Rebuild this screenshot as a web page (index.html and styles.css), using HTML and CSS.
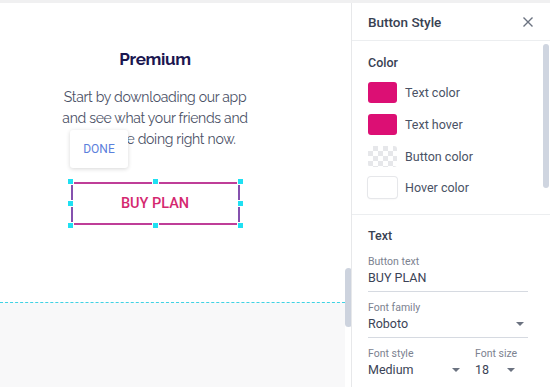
FILE: index.html
```html
<!DOCTYPE html>
<html>
<head>
<meta charset="utf-8">
<link rel="stylesheet" href="styles.css">
</head>
<body>
<div class="topbar"></div>
<div class="main">
  <div class="canvas">
    <div class="page">
      <div class="column">
        <h1 class="title">Premium</h1>
        <p class="lead">Start by downloading our app<br>and see what your friends and<br>family are doing right now.</p>
        <div class="btnwrap">
          <div class="buybtn">BUY PLAN</div>
          <span class="h h-tl"></span><span class="h h-tc"></span><span class="h h-tr"></span>
          <span class="h h-ml"></span><span class="h h-mr"></span>
          <span class="h h-bl"></span><span class="h h-bc"></span><span class="h h-br"></span>
        </div>
      </div>
      <div class="done">DONE</div>
    </div>
    <div class="below"></div>
    <div class="cscroll"></div>
  </div>
  <div class="panel">
    <div class="phead">
      <span class="ptitle">Button Style</span>
      <svg class="close" width="12" height="12" viewBox="0 0 12 12"><path d="M1.5 1.5 L10.5 10.5 M10.5 1.5 L1.5 10.5" stroke="#6b7280" stroke-width="1.4" fill="none"/></svg>
    </div>
    <div class="section">
      <div class="stitle">Color</div>
      <div class="crow"><span class="sw sw-pink"></span><span class="clabel">Text color</span></div>
      <div class="crow"><span class="sw sw-pink"></span><span class="clabel">Text hover</span></div>
      <div class="crow"><span class="sw sw-check"></span><span class="clabel">Button color</span></div>
      <div class="crow"><span class="sw sw-white"></span><span class="clabel">Hover color</span></div>
    </div>
    <div class="section sec2">
      <div class="stitle">Text</div>
      <div class="field">
        <div class="flabel">Button text</div>
        <div class="fvalue">BUY PLAN</div>
      </div>
      <div class="field">
        <div class="flabel">Font family</div>
        <div class="fvalue sel">Roboto<span class="arrow"></span></div>
      </div>
      <div class="frow">
        <div class="field f-style">
          <div class="flabel">Font style</div>
          <div class="fvalue sel nb">Medium<span class="arrow"></span></div>
        </div>
        <div class="field f-size">
          <div class="flabel">Font size</div>
          <div class="fvalue sel nb">18<span class="arrow"></span></div>
        </div>
      </div>
    </div>
    <div class="pscroll"></div>
  </div>
</div>
</body>
</html>
```

FILE: styles.css
```css
* { box-sizing: border-box; }
html, body { margin: 0; padding: 0; }
body {
  width: 550px; height: 387px; overflow: hidden;
  background: #fff;
  font-family: Roboto, "Liberation Sans", sans-serif;
}
.topbar { height: 3px; background: #f0f0f1; }
.main { display: flex; height: 384px; }
.canvas {
  width: 351px; position: relative;
  display: flex; flex-direction: column;
}
.page { height: 299px; background: #fff; position: relative; }
.column { width: 310px; text-align: center; padding-top: 45px; }
.title {
  margin: 0; font-family: Raleway, Lato, "Open Sans", sans-serif;
  font-size: 17px; line-height: 22px; font-weight: 700; color: #1b1650;
  letter-spacing: -0.3px;
}
.lead {
  margin: 17px 0 0; font-family: Raleway, Lato, "Open Sans", sans-serif;
  font-size: 14px; line-height: 21px; color: #4b5166; font-weight: 400;
  letter-spacing: -0.3px;
}
.btnwrap { position: relative; width: 169px; height: 43px; margin: 32px auto 0; }
.buybtn {
  height: 43px; border: 2px solid #bf3e98;
  border-left-color: #8551ae; border-right-color: #8551ae;
  display: flex; align-items: center; justify-content: center;
  font-size: 14.5px; font-weight: 500; color: #d4286f;
}
.h {
  position: absolute; width: 7px; height: 7px; background: #1fe0f2;
  border: 1px solid #fff;
}
.h-tl { left: -4px; top: -4px; } .h-tc { left: 81px; top: -4px; } .h-tr { right: -4px; top: -4px; }
.h-ml { left: -4px; top: 18px; } .h-mr { right: -4px; top: 18px; }
.h-bl { left: -4px; bottom: -4px; } .h-bc { left: 81px; bottom: -4px; } .h-br { right: -4px; bottom: -4px; }
.done {
  position: absolute; left: 70px; top: 127px; width: 58px; height: 38px;
  background: #fff; border-radius: 3px;
  box-shadow: 0 1px 4px rgba(0,0,0,0.16);
  display: flex; align-items: center; justify-content: center;
  font-size: 12px; color: #5b80dc; font-weight: 400;
}
.below { flex: 1; background: #f8f8f9; border-top: 1px dashed #3fd3e4; margin-right: 6px; }
.cscroll {
  position: absolute; left: 345px; top: 265px; width: 7px; height: 59px;
  background: #cdd3de; border-radius: 4px;
}
.panel {
  width: 199px; border-left: 1px solid #e7e8ea; position: relative;
  color: #3b4356;
}
.phead {
  height: 38px; border-bottom: 1px solid #eceef0;
  display: flex; align-items: center; justify-content: space-between;
  padding: 0 16px 0 16px;
}
.ptitle { font-size: 13.5px; font-weight: 500; color: #384152; }
.close { display: block; }
.section { padding: 0 16px; border-bottom: 1px solid #eceef0; height: 174px; }
.stitle { font-size: 12.5px; font-weight: 500; color: #384152; padding-top: 14px; line-height: 16px; margin-bottom: 6px; }
.crow { display: flex; align-items: center; height: 31.7px; }
.sw { width: 29px; height: 21px; border-radius: 3px; margin-right: 8px; flex: none; }
.sw-pink { background: #dc0f74; }
.sw-white { background: #fff; box-shadow: 0 0 0 1px #e6e7ea, 0 1px 2px rgba(0,0,0,0.08); }
.sw-check {
  background-color: #fff;
  background-image:
    linear-gradient(45deg, #e6e7ea 25%, transparent 25%, transparent 75%, #e6e7ea 75%),
    linear-gradient(45deg, #e6e7ea 25%, transparent 25%, transparent 75%, #e6e7ea 75%);
  background-size: 10px 10px; background-position: 0 0, 5px 5px;
}
.clabel { font-size: 12.5px; color: #4a5265; }
.sec2 { border-bottom: none; height: auto; }
.sec2 .stitle { padding-top: 13px; margin-bottom: 11px; }
.field { margin-bottom: 9px; }
.flabel { font-size: 10.5px; color: #7c8290; line-height: 13px; }
.fvalue {
  font-size: 12.5px; color: #3b4356; line-height: 18px; padding-bottom: 4px; margin-top: 1px;
  border-bottom: 1.5px solid #d6dae1; width: 160px; position: relative;
}
.fvalue.nb { border-bottom: none; }
.arrow {
  position: absolute; right: 4px; top: 7px; width: 0; height: 0;
  border-left: 4px solid transparent; border-right: 4px solid transparent;
  border-top: 4px solid #6b7280;
}
.frow { display: flex; }
.f-style { width: 107px; }
.f-style .fvalue { width: 96px; }
.f-size .fvalue { width: 44px; }
.pscroll {
  position: absolute; right: 1px; top: 41px; width: 6px; height: 144px;
  background: #cfd5e0; border-radius: 3px;
}
```
